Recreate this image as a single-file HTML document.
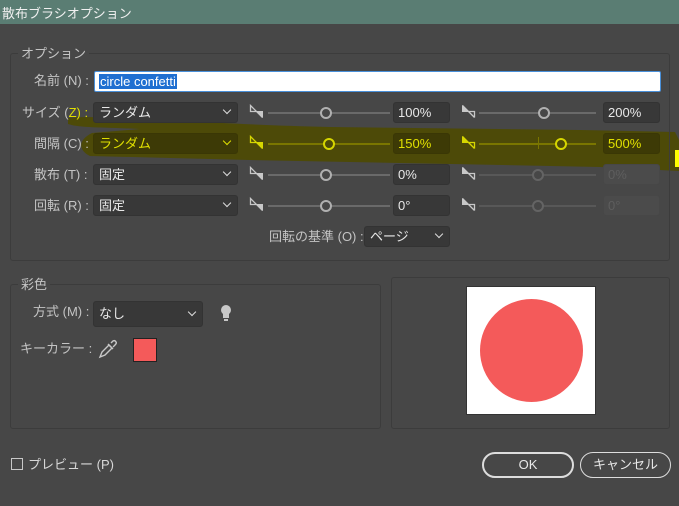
<!DOCTYPE html>
<html><head><meta charset="utf-8"><style>
*{box-sizing:border-box;margin:0;padding:0}
body{width:679px;height:506px;background:#474747;position:relative;overflow:hidden;font-family:"Liberation Sans","Noto Sans CJK JP",sans-serif;font-size:13px;color:#c4c4c4}
.a{position:absolute}
.title{left:0;top:0;width:679px;height:24px;background:#5a7d73;color:#f0f0f0;font-size:13px;padding:3px 0 0 2px}
.grp{border:1px solid #3c3c3c;border-radius:3px}
.lbl{white-space:nowrap;line-height:16px}
.dd{background:#383838;border:1px solid #333;border-radius:3px;color:#e8e8e8;padding:0 0 0 5px;line-height:19px;height:21px}
.dd .v{position:absolute;right:7px;top:4px;width:6px;height:6px;border-right:1.5px solid #ddd;border-bottom:1.5px solid #ddd;transform:rotate(45deg)}
.tb{background:#383838;border:1px solid #333;border-radius:3px;color:#e8e8e8;padding-left:4px;line-height:19px;height:21px}
.tb.dis{background:#4b4b4b;border-color:#474747;color:#5e5e5e}
.sl{height:2px;background:#6a6a6a}
.kn{width:12px;height:12px;border:2.5px solid #b0b0b0;border-radius:50%;background:#474747}
.y{color:#e0e000}
</style></head><body>
<div class="a title">散布ブラシオプション</div>

<svg class="a" style="left:0;top:0" width="679" height="506">
<path d="M68,118 C100,114 200,124 330,127 L580,130 L675,132 L679,140 L679,171 L600,167 L400,163 L250,160 L90,156 C78,150 78,140 92,133 L140,129 C100,127 80,128 68,124 Z" fill="#4d4a08"/>
<rect x="675" y="150" width="4" height="17" fill="#ffff00"/>
</svg>

<div class="a grp" style="left:10px;top:53px;width:660px;height:208px"></div>
<div class="a lbl" style="left:18px;top:46px;background:#474747;padding:0 3px">オプション</div>

<div class="a lbl" style="left:34px;top:73px">名前 (N) :</div>
<div class="a" style="left:94px;top:71px;width:567px;height:21px;background:#fff;border:1px solid #4a90d9;border-radius:2px"><span style="position:absolute;left:4px;top:2px;background:#1f6fd1;color:#fff;line-height:15px;padding:0 1px">circle confetti</span></div>

<div class="a lbl" style="left:22px;top:105px">サイズ (<span class="y">Z) :</span></div>
<div class="a lbl" style="left:34px;top:136px">間隔 (C) :</div>
<div class="a lbl" style="left:34px;top:167px">散布 (T) :</div>
<div class="a lbl" style="left:34px;top:198px">回転 (R) :</div>

<div class="a dd" style="left:93px;top:102px;width:145px">ランダム<span class="v"></span></div>
<div class="a dd y" style="left:93px;top:133px;width:145px;background:#3d3a06;border-color:#3a3705;color:#e0e000">ランダム<span class="v" style="border-color:#e0e000"></span></div>
<div class="a dd" style="left:93px;top:164px;width:145px">固定<span class="v"></span></div>
<div class="a dd" style="left:93px;top:195px;width:145px">固定<span class="v"></span></div>

<svg class="a" style="left:249px;top:104px" width="430" height="110">
<defs>
<g id="iL"><path d="M1.5,1.5 L1.5,7.5 L7.5,7.5 Z M1.5,1.5 L13.5,13.5" fill="none" stroke="currentColor" stroke-width="1.3"/><path d="M7,7 L14,7 L14,14 Z" fill="currentColor"/></g>
<g id="iR"><path d="M1,1 L1,8 L8,8 Z" fill="currentColor"/><path d="M1.5,1.5 L13.5,13.5 M7.5,7.5 L13.5,7.5 L13.5,13.5" fill="none" stroke="currentColor" stroke-width="1.3"/></g>
</defs>
<use href="#iL" style="color:#c8c8c8"/>
<use href="#iL" y="31" style="color:#d6d600"/>
<use href="#iL" y="62" style="color:#c8c8c8"/>
<use href="#iL" y="93" style="color:#c8c8c8"/>
<use href="#iR" x="212" style="color:#c8c8c8"/>
<use href="#iR" x="212" y="31" style="color:#d6d600"/>
<use href="#iR" x="212" y="62" style="color:#c8c8c8"/>
<use href="#iR" x="212" y="93" style="color:#c8c8c8"/>
</svg>

<div class="a sl" style="left:268px;top:112px;width:122px"></div>
<div class="a kn" style="left:320px;top:107px"></div>
<div class="a sl" style="left:268px;top:143px;width:122px;background:#7a7600"></div>
<div class="a kn" style="left:323px;top:138px;border-color:#d6d600;background:#4d4a08"></div>
<div class="a sl" style="left:268px;top:174px;width:122px"></div>
<div class="a kn" style="left:320px;top:169px"></div>
<div class="a sl" style="left:268px;top:205px;width:122px"></div>
<div class="a kn" style="left:320px;top:200px"></div>

<div class="a tb" style="left:393px;top:102px;width:57px">100%</div>
<div class="a tb" style="left:393px;top:133px;width:57px;background:#3d3a06;border-color:#3a3705;color:#e0e000">150%</div>
<div class="a tb" style="left:393px;top:164px;width:57px">0%</div>
<div class="a tb" style="left:393px;top:195px;width:57px">0°</div>

<div class="a sl" style="left:479px;top:112px;width:117px"></div>
<div class="a kn" style="left:538px;top:107px"></div>
<div class="a sl" style="left:479px;top:143px;width:117px;background:#7a7600"></div>
<div class="a" style="left:538px;top:137px;width:1px;height:12px;background:#7a7600"></div>
<div class="a kn" style="left:555px;top:138px;border-color:#d6d600;background:#4d4a08"></div>
<div class="a sl" style="left:479px;top:174px;width:117px;background:#585858"></div>
<div class="a kn" style="left:532px;top:169px;border-color:#646464"></div>
<div class="a sl" style="left:479px;top:205px;width:117px;background:#585858"></div>
<div class="a kn" style="left:532px;top:200px;border-color:#646464"></div>

<div class="a tb" style="left:603px;top:102px;width:57px">200%</div>
<div class="a tb" style="left:603px;top:133px;width:57px;background:#3d3a06;border-color:#3a3705;color:#e0e000">500%</div>
<div class="a tb dis" style="left:603px;top:164px;width:57px">0%</div>
<div class="a tb dis" style="left:603px;top:195px;width:57px">0°</div>

<div class="a lbl" style="left:269px;top:229px">回転の基準 (O) :</div>
<div class="a dd" style="left:364px;top:226px;width:86px">ページ<span class="v"></span></div>

<div class="a grp" style="left:10px;top:284px;width:371px;height:145px"></div>
<div class="a lbl" style="left:18px;top:277px;background:#474747;padding:0 3px">彩色</div>
<div class="a lbl" style="left:33px;top:304px">方式 (M) :</div>
<div class="a dd" style="left:93px;top:301px;width:110px;height:26px;line-height:24px">なし<span class="v" style="top:7px"></span></div>
<svg class="a" style="left:219px;top:304px" width="14" height="18"><circle cx="7" cy="6" r="5" fill="#c8c8c8"/><rect x="4" y="9" width="6" height="5" fill="#c8c8c8"/><rect x="5" y="15" width="4" height="2" fill="#c8c8c8"/></svg>
<div class="a lbl" style="left:20px;top:341px">キーカラー :</div>
<svg class="a" style="left:98px;top:339px" width="20" height="20"><g fill="none" stroke="#c8c8c8" stroke-width="1.4"><path d="M2,18 L4,13 L11,6 L14,9 L7,16 Z"/><path d="M10,5 L15,10 M13,4 L15,2 Q17,1 18,3 Q19,4 17,6 L15,8"/></g></svg>
<div class="a" style="left:133px;top:338px;width:24px;height:24px;background:#f45a5a;border:1px solid #222"></div>

<div class="a grp" style="left:391px;top:277px;width:279px;height:152px"></div>
<div class="a" style="left:466px;top:286px;width:130px;height:129px;background:#fff;border:1px solid #333"></div>
<div class="a" style="left:480px;top:299px;width:103px;height:103px;border-radius:50%;background:#f45a5a"></div>

<div class="a" style="left:11px;top:458px;width:12px;height:12px;border:1px solid #c8c8c8"></div>
<div class="a lbl" style="left:28px;top:457px;color:#d8d8d8">プレビュー (P)</div>

<div class="a" style="left:482px;top:452px;width:92px;height:26px;border:2px solid #ddd;border-radius:13px;color:#e8e8e8;text-align:center;line-height:22px">OK</div>
<div class="a" style="left:580px;top:452px;width:91px;height:26px;border:1.5px solid #ddd;border-radius:13px;color:#e8e8e8;text-align:center;line-height:23px">キャンセル</div>
</body></html>
